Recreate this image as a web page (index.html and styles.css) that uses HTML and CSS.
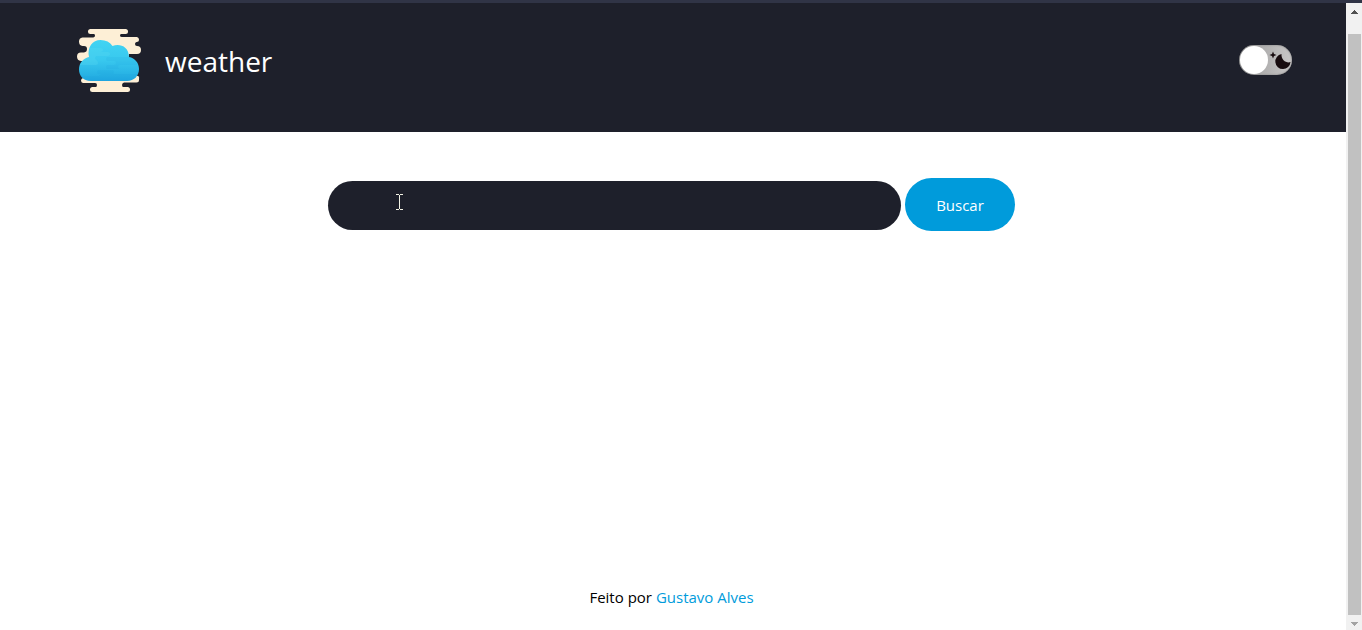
FILE: index.html
```html
<!DOCTYPE html>
<html lang="pt-BR">
<head>
<meta charset="utf-8">
<meta name="viewport" content="width=device-width, initial-scale=1">
<title>weather</title>
<link rel="stylesheet" href="styles.css">
</head>
<body>
<div class="window">
  <div class="page">
    <header class="header">
      <div class="brand">
        <svg class="logo" viewBox="0 0 64 64" aria-hidden="true">
          <defs>
            <linearGradient id="sky" x1="0" y1="0" x2="0" y2="1">
              <stop offset="0" stop-color="#42d4f3"/>
              <stop offset=".5" stop-color="#38c8ee"/>
              <stop offset="1" stop-color="#20a8e0"/>
            </linearGradient>
          </defs>
          <g fill="#fdefd6">
            <rect x="11" y="1" width="40" height="5" rx="2.5"/>
            <path d="M16 5H45Q43 6 43 7.500Q43 9 45 9H60Q62 9.500 62 11.500Q62 14 59.500 14Q58 14.500 58 16Q58 18 60 18Q64 18 64 22Q64 26 60 26H52L50 50H12V33H4Q0 32.500 0 28.500Q0 24.500 4 24.500H7Q10 24 10 21Q10 18 7 18H5.500Q2 17.500 2 13.500Q2 10 5.500 9.500H15Q18 9.500 18 7.500Q18 6 16 5Z"/>
            <path d="M6 50H62V52Q62 54.500 59.500 54.500H47Q45 55 45 57Q45 59 47 59.500H18Q20 59 20 57Q20 55 18 55H6Q4 54.500 4 52.500Q4 50.500 6 50Z"/>
            <rect x="13" y="59" width="40" height="5" rx="2.500"/>
            <circle cx="60" cy="50" r="2.200"/>
          </g>
          <path fill="url(#sky)" d="M14 53C6 53 2 47.500 2 41.500C2 35 6 30.500 12 29C10 19 15.500 12 23.500 12C29 12 33 14 35.500 18C42 15 52 18 52 29C58 30 62 35 62 41C62 48 57 53 50 53Z"/>
          <path fill="#5bdcf2" opacity=".3" d="M13 20H24Q26 20 26 22Q26 24 24 24H31Q33 24 33 26T31 28H20Q18 28 18 30T20 32H19Q21 33 21 35T19 37H3Q5 31 12 29Q11 24 13 20Z"/>
          <path fill="#1595d6" opacity=".1" d="M31 29H52Q59 31 61 37H43Q41 37 41 39T43 41H31Q29 41 29 39T31 37H37Q39 37 39 35T37 33H31Q29 33 29 31T31 29ZM22 42H35Q37 42 37 44T35 46H60Q57 53 50 53H14Q7 53 4 48H20Q24 48 24 46H22Q20 46 20 44T22 42Z"/>
        </svg>
        <h1 class="title">weather</h1>
      </div>
      <label class="theme">
        <input class="theme-input" type="checkbox" aria-label="Tema escuro">
        <svg class="theme-moon" viewBox="0 0 22 22" aria-hidden="true">
          <path fill="#170b0e" d="M4 1.500L5 4L7.500 5L5 6L4 8.500L3 6L.500 5L3 4Z"/>
          <path fill="#170b0e" d="M12.500 4A7.600 7.600 0 1 0 21.500 12C18 13.500 12 10.500 12.500 4Z"/>
        </svg>
      </label>
    </header>
    <main class="main">
      <form class="search">
        <div class="field">
          <input class="search-input" type="text" aria-label="Cidade">
          <svg class="cursor" viewBox="0 0 7 16" aria-hidden="true">
            <path fill="#f3f3e5" d="M0 0H3V1H4V0H7V1H4V15H7V16H4V15H3V16H0V15H3V1H0Z"/>
          </svg>
        </div>
        <button class="search-button" type="button">Buscar</button>
      </form>
    </main>
    <footer class="footer">Feito por <a class="author" href="#">Gustavo Alves</a></footer>
  </div>
  <div class="scrollbar" aria-hidden="true">
    <svg class="arrow" viewBox="0 0 7 4"><path fill="#505050" d="M3 0H4V1H5V2H6V3H7V4H0V3H1V2H2V1H3Z"/></svg>
    <div class="thumb"></div>
    <svg class="arrow" viewBox="0 0 7 4"><path fill="#a3a3a3" d="M0 0H7V1H6V2H5V3H4V4H3V3H2V2H1V1H0Z"/></svg>
  </div>
</div>
</body>
</html>
```
FILE: styles.css
```css
* {
  box-sizing: border-box;
}

body {
  margin: 0;
  background: #fff;
  color: #000;
  font-family: "Segoe UI", "Open Sans", "Noto Sans", sans-serif;
  font-size: 15px;
  line-height: 20px;
}

.window {
  display: flex;
  min-height: 100vh;
  border-top: 3px solid #303446;
}

.page {
  display: flex;
  flex: 1;
  flex-direction: column;
}

.header {
  display: flex;
  align-items: flex-start;
  justify-content: space-between;
  padding: 25px 54px 40px 77px;
  background: #1e202b;
}

.brand {
  display: flex;
  align-items: center;
  gap: 24px;
}

.logo {
  width: 64px;
  height: 64px;
}

.title {
  margin: 0;
  padding-top: 2px;
  color: #fff;
  font-size: 28px;
  font-weight: 400;
  line-height: 40px;
}

.theme {
  position: relative;
  display: flex;
  margin-top: 17px;
}

.theme-input {
  display: flex;
  align-items: center;
  width: 53px;
  height: 30px;
  margin: 0;
  padding: 1px;
  border-radius: 15px;
  background: linear-gradient(90deg, #9a9a9a, #c9c7c7);
  box-shadow: inset 0 0 2px #777;
  appearance: none;
}

.theme-input::before {
  width: 28px;
  height: 28px;
  border-radius: 50%;
  background: #fff;
  content: "";
}

.theme-moon {
  position: absolute;
  top: 5px;
  right: 1px;
  width: 22px;
  height: 22px;
}

.main {
  flex: 1;
  padding: 46px 20px;
}

.search {
  display: flex;
  align-items: flex-end;
  justify-content: center;
  gap: 4px;
  padding-right: 3px;
}

.field {
  position: relative;
  flex: 0 1 573px;
  padding-bottom: 1px;
}

.search-input {
  display: block;
  width: 100%;
  height: 49px;
  padding: 0 32px;
  border: 0;
  border-radius: 25px;
  background: #1e202b;
  color: #fff;
  font: inherit;
}

.cursor {
  position: absolute;
  top: 13px;
  left: 68px;
  width: 7px;
  height: 16px;
}

.search-button {
  width: 110px;
  height: 53px;
  border: 0;
  border-radius: 27px;
  background: #009bdb;
  color: #fff;
  font: inherit;
}

.footer {
  padding: 0 3px 23px 0;
  text-align: center;
}

.author {
  color: #009bdb;
  text-decoration: none;
}

.scrollbar {
  display: flex;
  flex-direction: column;
  align-items: center;
  width: 16px;
  padding: 7px 1px 4px 2px;
  background: #f1f1f1;
}

.thumb {
  flex: 1;
  align-self: stretch;
  margin: 20px 0 7px;
  background: #c1c1c1;
}

.arrow {
  width: 7px;
  height: 4px;
}
```
